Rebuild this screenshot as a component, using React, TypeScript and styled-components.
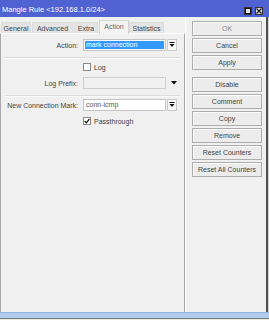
import React from "react";
import styled, { createGlobalStyle } from "styled-components";

const Global = createGlobalStyle`
  html, body { margin: 0; padding: 0; width: 269px; height: 320px; overflow: hidden; background: #f0f0f0; }
  body { font-family: "Liberation Sans", Arial, sans-serif; font-size: 7px; color: #333; }
  * { box-sizing: border-box; }
`;

const Window = styled.div`
  width: 269px;
  height: 320px;
  display: flex;
  flex-direction: column;
  background: #f0f0f0;
`;

const TitleBar = styled.div`
  height: 17px;
  background: #5061d2;
  display: flex;
  align-items: center;
  justify-content: space-between;
  padding: 0 6px 0 2px;
`;

const Title = styled.span`
  color: #fff;
  font-size: 7.5px;
  line-height: 1;
  padding-top: 2px;
`;

const Controls = styled.div`
  display: flex;
  gap: 3px;
  padding-top: 4px;
`;

const CtrlBox = styled.div`
  width: 8px;
  height: 8px;
  background: #e8e8e8;
  border: 1px solid #333;
  display: flex;
  align-items: center;
  justify-content: center;
`;

const Main = styled.div`
  flex: 1;
  display: flex;
  min-height: 0;
`;

const LeftPane = styled.div`
  width: 185px;
  display: flex;
  flex-direction: column;
`;

const TabStrip = styled.div`
  height: 16px;
  display: flex;
  align-items: flex-end;
  padding-left: 1px;
`;

const Tab = styled.div<{ $w: number; $active?: boolean }>`
  width: ${(p) => p.$w}px;
  height: ${(p) => (p.$active ? 14 : 11)}px;
  margin-right: ${(p) => (p.$active ? 0 : 1)}px;
  background: ${(p) => (p.$active ? "#f3f3f3" : "#e4e4e4")};
  border: 1px solid ${(p) => (p.$active ? "#d4d4d4" : "#dadada")};
  border-bottom: none;
  color: ${(p) => (p.$active ? "#666" : "#444")};
  display: flex;
  justify-content: center;
  align-items: ${(p) => (p.$active ? "flex-start" : "center")};
  padding-top: ${(p) => (p.$active ? 2 : 0)}px;
  line-height: 1;
  position: relative;
  z-index: ${(p) => (p.$active ? 1 : 0)};
  margin-bottom: ${(p) => (p.$active ? -1 : 0)}px;
`;

const Panel = styled.div`
  flex: 1;
  border-top: 1px solid #fff;
  border-left: 1px solid #a9a9a9;
  border-right: 1px solid #a9a9a9;
  display: flex;
  flex-direction: column;
`;

const FormRow = styled.div<{ $mt: number }>`
  display: flex;
  align-items: center;
  height: 12px;
  margin-top: ${(p) => p.$mt}px;
`;

const Label = styled.div`
  width: 77px;
  margin-right: 5px;
  text-align: right;
  color: #444;
  line-height: 1;
`;

const Field = styled.div<{ $selected?: boolean; $disabled?: boolean }>`
  width: 83px;
  height: 12px;
  border: 1px solid ${(p) => (p.$disabled ? "#cfcfcf" : "#c4c4c4")};
  background: ${(p) => (p.$disabled ? "#f0f0f0" : "#fff")};
  padding: 1px;
  display: flex;
`;

const FieldText = styled.div<{ $selected?: boolean }>`
  flex: 1;
  background: ${(p) => (p.$selected ? "#3399ff" : "transparent")};
  color: ${(p) => (p.$selected ? "#fff" : "#555")};
  line-height: 8px;
  padding-left: 1px;
`;

const DropBtn = styled.div`
  width: 10px;
  height: 12px;
  margin-left: 1px;
  background: #f7f7f7;
  border: 1px solid #cacaca;
  display: flex;
  align-items: center;
  justify-content: center;
`;

const PlainDrop = styled.div`
  margin-left: 5px;
  display: flex;
  align-items: center;
`;

const Separator = styled.div<{ $mt: number }>`
  margin: ${(p) => p.$mt}px 4px 0 4px;
  width: 175px;
  height: 2px;
  border-top: 1px solid #dcdcdc;
  border-bottom: 1px solid #fafafa;
`;

const CheckRow = styled.div<{ $mt: number }>`
  display: flex;
  align-items: center;
  height: 8px;
  margin-top: ${(p) => p.$mt}px;
  padding-left: 82px;
  gap: 3px;
  color: #444;
  line-height: 1;
`;

const Check = styled.div`
  width: 8px;
  height: 8px;
  background: #fff;
  border: 1px solid #8a8a8a;
  display: flex;
  align-items: center;
  justify-content: center;
`;

const RightPane = styled.div`
  flex: 1;
  border-left: 1px solid #fff;
  padding: 4px 0 0 6px;
  display: flex;
  flex-direction: column;
`;

const Btn = styled.div<{ $gapTop?: number; $dim?: boolean }>`
  width: 70px;
  height: 15px;
  margin-top: ${(p) => p.$gapTop ?? 2}px;
  background: #ececec;
  border: 1px solid #adadad;
  box-shadow: inset 1px 1px 0 #fbfbfb;
  color: ${(p) => (p.$dim ? "#8a8a8a" : "#444")};
  display: flex;
  align-items: center;
  justify-content: center;
  line-height: 1;
`;

const Edge = styled.div`
  width: 3px;
  border-left: 2px solid #4e4e4e;
  background: #d4d4d4;
`;

const BottomBand = styled.div`
  height: 6px;
  background: #b0cdee;
  border-top: 1px solid #8fb4de;
`;

const Footer = styled.div`
  height: 2px;
  background: #e6e6e6;
  border-top: 1px solid #7c7c7c;
`;

const DropIcon = () => (
  <svg width="6" height="6" viewBox="0 0 6 6">
    <rect x="0.5" y="0" width="5" height="1" fill="#111" />
    <path d="M0.5 2 H5.5 L3 5 Z" fill="#111" />
  </svg>
);

const Tri = () => (
  <svg width="6" height="4" viewBox="0 0 6 4">
    <path d="M0 0 H6 L3 3.5 Z" fill="#111" />
  </svg>
);

const Tick = () => (
  <svg width="6" height="6" viewBox="0 0 6 6">
    <path d="M0.6 3 L2.3 4.8 L5.4 1" stroke="#111" strokeWidth="1.2" fill="none" />
  </svg>
);

const tabs: { t: string; w: number; a?: boolean }[] = [
  { t: "General", w: 30 },
  { t: "Advanced", w: 41 },
  { t: "Extra", w: 24 },
  { t: "Action", w: 30, a: true },
  { t: "Statistics", w: 35 },
];

export default function App() {
  return (
    <>
      <Global />
      <Window>
        <TitleBar>
          <Title>Mangle Rule &lt;192.168.1.0/24&gt;</Title>
          <Controls>
            <CtrlBox>
              <svg width="6" height="6" viewBox="0 0 6 6">
                <rect x="0.5" y="0.5" width="5" height="5" fill="none" stroke="#111" strokeWidth="1" />
              </svg>
            </CtrlBox>
            <CtrlBox>
              <svg width="6" height="6" viewBox="0 0 6 6">
                <path d="M0.5 0.5 L5.5 5.5 M5.5 0.5 L0.5 5.5" stroke="#111" strokeWidth="1.3" />
              </svg>
            </CtrlBox>
          </Controls>
        </TitleBar>
        <Main>
          <LeftPane>
            <TabStrip>
              {tabs.map((x) => (
                <Tab key={x.t} $w={x.w} $active={x.a}>
                  {x.t}
                </Tab>
              ))}
            </TabStrip>
            <Panel>
              <FormRow $mt={5}>
                <Label>Action:</Label>
                <Field>
                  <FieldText $selected>mark connection</FieldText>
                </Field>
                <DropBtn>
                  <DropIcon />
                </DropBtn>
              </FormRow>
              <Separator $mt={6} />
              <CheckRow $mt={4}>
                <Check />
                <span>Log</span>
              </CheckRow>
              <FormRow $mt={6}>
                <Label>Log Prefix:</Label>
                <Field $disabled>
                  <FieldText />
                </Field>
                <PlainDrop>
                  <Tri />
                </PlainDrop>
              </FormRow>
              <Separator $mt={6} />
              <FormRow $mt={2}>
                <Label>New Connection Mark:</Label>
                <Field>
                  <FieldText>conn-icmp</FieldText>
                </Field>
                <DropBtn>
                  <DropIcon />
                </DropBtn>
              </FormRow>
              <CheckRow $mt={6}>
                <Check>
                  <Tick />
                </Check>
                <span>Passthrough</span>
              </CheckRow>
            </Panel>
          </LeftPane>
          <RightPane>
            <Btn $gapTop={0} $dim>OK</Btn>
            <Btn>Cancel</Btn>
            <Btn>Apply</Btn>
            <Btn $gapTop={7}>Disable</Btn>
            <Btn>Comment</Btn>
            <Btn>Copy</Btn>
            <Btn>Remove</Btn>
            <Btn>Reset Counters</Btn>
            <Btn>Reset All Counters</Btn>
          </RightPane>
          <Edge />
        </Main>
        <BottomBand />
        <Footer />
      </Window>
    </>
  );
}
